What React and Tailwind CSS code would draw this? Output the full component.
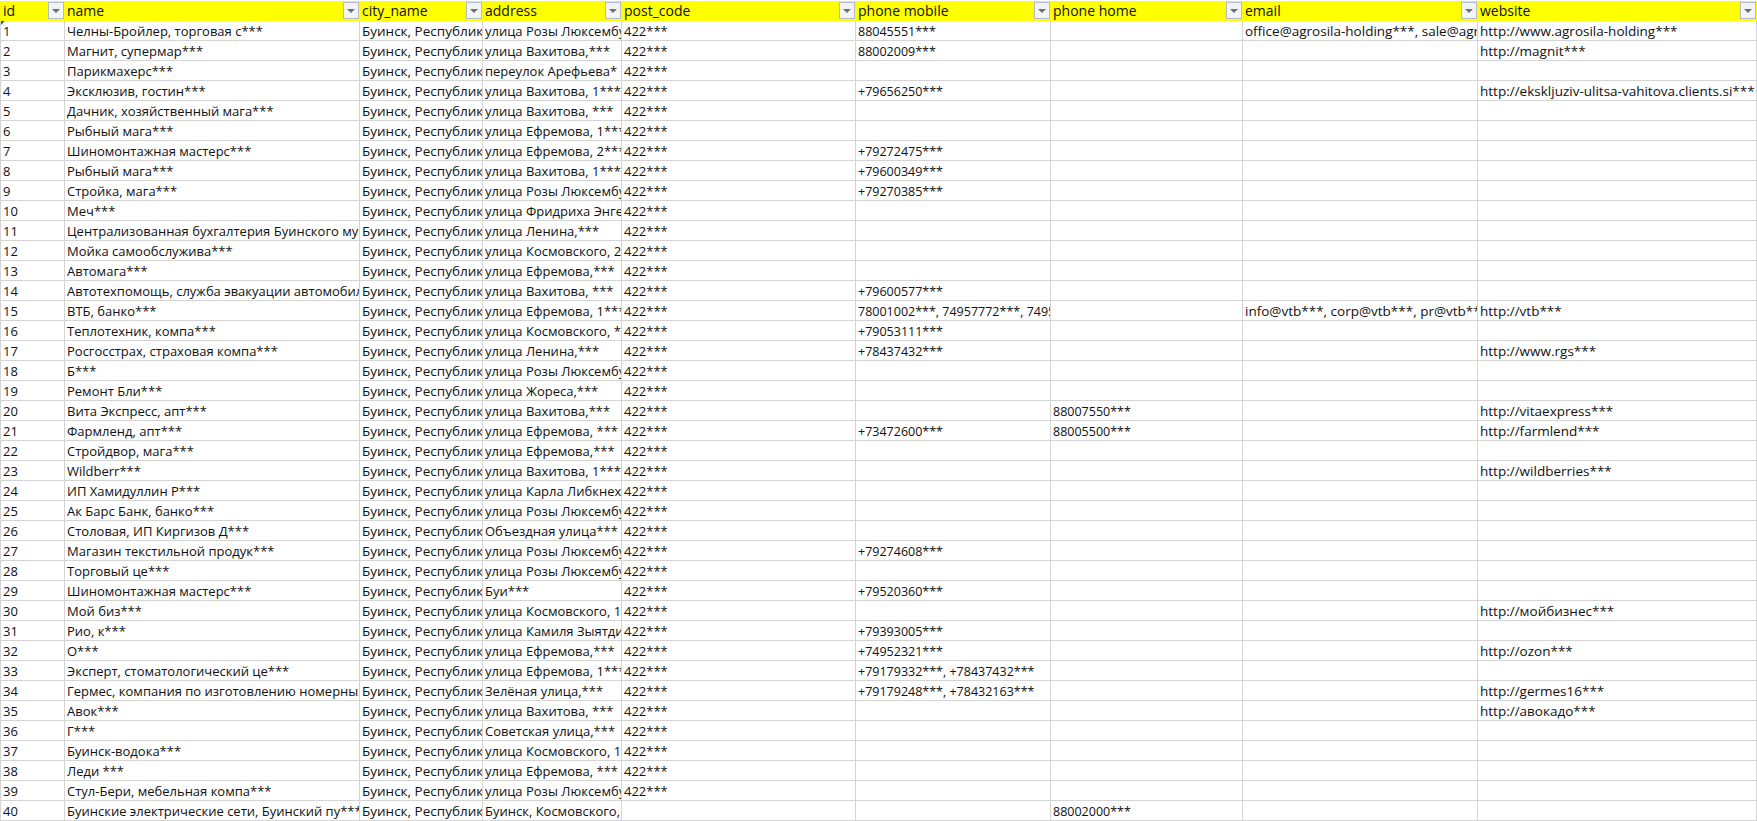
const columns = [
  { key: 'id', w: 'w-[65px]', pad: 'pl-[3px]', size: 'text-[13px]' },
  { key: 'name', w: 'w-[295px]', pad: 'pl-[2px]', size: 'text-[13px]' },
  { key: 'city_name', w: 'w-[123px]', pad: 'pl-[2px]', size: 'text-[13.5px]' },
  { key: 'address', w: 'w-[139px]', pad: 'pl-[2px]', size: 'text-[13px]' },
  { key: 'post_code', w: 'w-[234px]', pad: 'pl-[2px]', size: 'text-[13px]' },
  { key: 'phone mobile', w: 'w-[195px]', pad: 'pl-[2px]', size: 'text-[12.5px]' },
  { key: 'phone home', w: 'w-[192px]', pad: 'pl-[2px]', size: 'text-[12.5px]' },
  { key: 'email', w: 'w-[235px]', pad: 'pl-[2px]', size: 'text-[13.5px]' },
  { key: 'website', w: 'w-[279px]', pad: 'pl-[2px]', size: 'text-[13.5px]' },
]

const city = 'Буинск, Республика Татарстан'
const lux = 'улица Розы Люксембург, ***'

// name, address, phone mobile, phone home, email, website
const rows = [
  ['Челны-Бройлер, торговая с***', lux, '88045551***', '', 'office@agrosila-holding***, sale@agrosila***', 'http://www.agrosila-holding***'],
  ['Магнит, супермар***', 'улица Вахитова,***', '88002009***', '', '', 'http://magnit***'],
  ['Парикмахерс***', 'переулок Арефьева*', '', '', '', ''],
  ['Эксклюзив, гостин***', 'улица Вахитова, 1***', '+79656250***', '', '', 'http://ekskljuziv-ulitsa-vahitova.clients.si***'],
  ['Дачник, хозяйственный мага***', 'улица Вахитова, ***', '', '', '', ''],
  ['Рыбный мага***', 'улица Ефремова, 1***', '', '', '', ''],
  ['Шиномонтажная мастерс***', 'улица Ефремова, 2***', '+79272475***', '', '', ''],
  ['Рыбный мага***', 'улица Вахитова, 1***', '+79600349***', '', '', ''],
  ['Стройка, мага***', lux, '+79270385***', '', '', ''],
  ['Меч***', 'улица Фридриха Энгельса, ***', '', '', '', ''],
  ['Централизованная бухгалтерия Буинского муниципального района***', 'улица Ленина,***', '', '', '', ''],
  ['Мойка самообслужива***', 'улица Космовского, 2***', '', '', '', ''],
  ['Автомага***', 'улица Ефремова,***', '', '', '', ''],
  ['Автотехпомощь, служба эвакуации автомобилей***', 'улица Вахитова, ***', '+79600577***', '', '', ''],
  ['ВТБ, банко***', 'улица Ефремова, 1***', '78001002***, 74957772***, 74957773***', '', 'info@vtb***, corp@vtb***, pr@vtb***', 'http://vtb***'],
  ['Теплотехник, компа***', 'улица Космовского, ***', '+79053111***', '', '', ''],
  ['Росгосстрах, страховая компа***', 'улица Ленина,***', '+78437432***', '', '', 'http://www.rgs***'],
  ['Б***', lux, '', '', '', ''],
  ['Ремонт Бли***', 'улица Жореса,***', '', '', '', ''],
  ['Вита Экспресс, апт***', 'улица Вахитова,***', '', '88007550***', '', 'http://vitaexpress***'],
  ['Фармленд, апт***', 'улица Ефремова, ***', '+73472600***', '88005500***', '', 'http://farmlend***'],
  ['Стройдвор, мага***', 'улица Ефремова,***', '', '', '', ''],
  ['Wildberr***', 'улица Вахитова, 1***', '', '', '', 'http://wildberries***'],
  ['ИП Хамидуллин Р***', 'улица Карла Либкнехта, ***', '', '', '', ''],
  ['Ак Барс Банк, банко***', lux, '', '', '', ''],
  ['Столовая, ИП Киргизов Д***', 'Объездная улица***', '', '', '', ''],
  ['Магазин текстильной продук***', lux, '+79274608***', '', '', ''],
  ['Торговый це***', lux, '', '', '', ''],
  ['Шиномонтажная мастерс***', 'Буи***', '+79520360***', '', '', ''],
  ['Мой биз***', 'улица Космовского, 1***', '', '', '', 'http://мойбизнес***'],
  ['Рио, к***', 'улица Камиля Зыятдинова, ***', '+79393005***', '', '', ''],
  ['О***', 'улица Ефремова,***', '+74952321***', '', '', 'http://ozon***'],
  ['Эксперт, стоматологический це***', 'улица Ефремова, 1***', '+79179332***, +78437432***', '', '', ''],
  ['Гермес, компания по изготовлению номерных знаков***', 'Зелёная улица,***', '+79179248***, +78432163***', '', '', 'http://germes16***'],
  ['Авок***', 'улица Вахитова, ***', '', '', '', 'http://авокадо***'],
  ['Г***', 'Советская улица,***', '', '', '', ''],
  ['Буинск-водока***', 'улица Космовского, 1***', '', '', '', ''],
  ['Леди ***', 'улица Ефремова, ***', '', '', '', ''],
  ['Стул-Бери, мебельная компа***', lux, '', '', '', ''],
  ['Буинские электрические сети, Буинский пу***', 'Буинск, Космовского, 1***', '', '88002000***', '', ''],
]

function FilterButton() {
  return (
    <span className="absolute right-px top-[1px] flex h-[17px] w-[16px] items-center justify-center border border-[#b4bccb] bg-[#f3f4f6]">
      <span className="h-0 w-0 border-x-[4px] border-t-[4px] border-x-transparent border-t-[#6b6f76]" />
    </span>
  )
}

function Cell({ col, children }) {
  return (
    <div className={`${col.w} ${col.pad} ${col.size} h-full shrink-0 overflow-hidden whitespace-nowrap border-r border-[#d4d4d4] pt-px leading-[19px]`}>
      {children}
    </div>
  )
}

export default function App() {
  return (
    <div className="h-[821px] w-[1757px] overflow-hidden bg-white pt-px text-[#111111] [font-family:'Open_Sans','Noto_Sans',sans-serif]">
      <div className="flex h-[20px] bg-[#ffff00]">
        {columns.map((c) => (
          <div key={c.key} className={`${c.w} ${c.pad} relative h-full shrink-0 text-[14px] leading-[19px]`}>
            {c.key}
            <FilterButton />
          </div>
        ))}
      </div>
      {rows.map((r, i) => (
        <div key={i} className="relative flex h-[20px] border-b border-[#d4d4d4]">
          {i === 0 && (
            <span className="absolute left-0 top-0 h-0 w-0 border-r-[5px] border-t-[5px] border-r-transparent border-t-[#1f7a2e]" />
          )}
          <span className="absolute left-0 top-0 h-full w-px bg-[#d4d4d4]" />
          <Cell col={columns[0]}>{i + 1}</Cell>
          <Cell col={columns[1]}>{r[0]}</Cell>
          <Cell col={columns[2]}>{city}</Cell>
          <Cell col={columns[3]}>{r[1]}</Cell>
          <Cell col={columns[4]}>{i === 39 ? '' : '422***'}</Cell>
          <Cell col={columns[5]}>{r[2]}</Cell>
          <Cell col={columns[6]}>{r[3]}</Cell>
          <Cell col={columns[7]}>{r[4]}</Cell>
          <Cell col={columns[8]}>{r[5]}</Cell>
        </div>
      ))}
    </div>
  )
}
